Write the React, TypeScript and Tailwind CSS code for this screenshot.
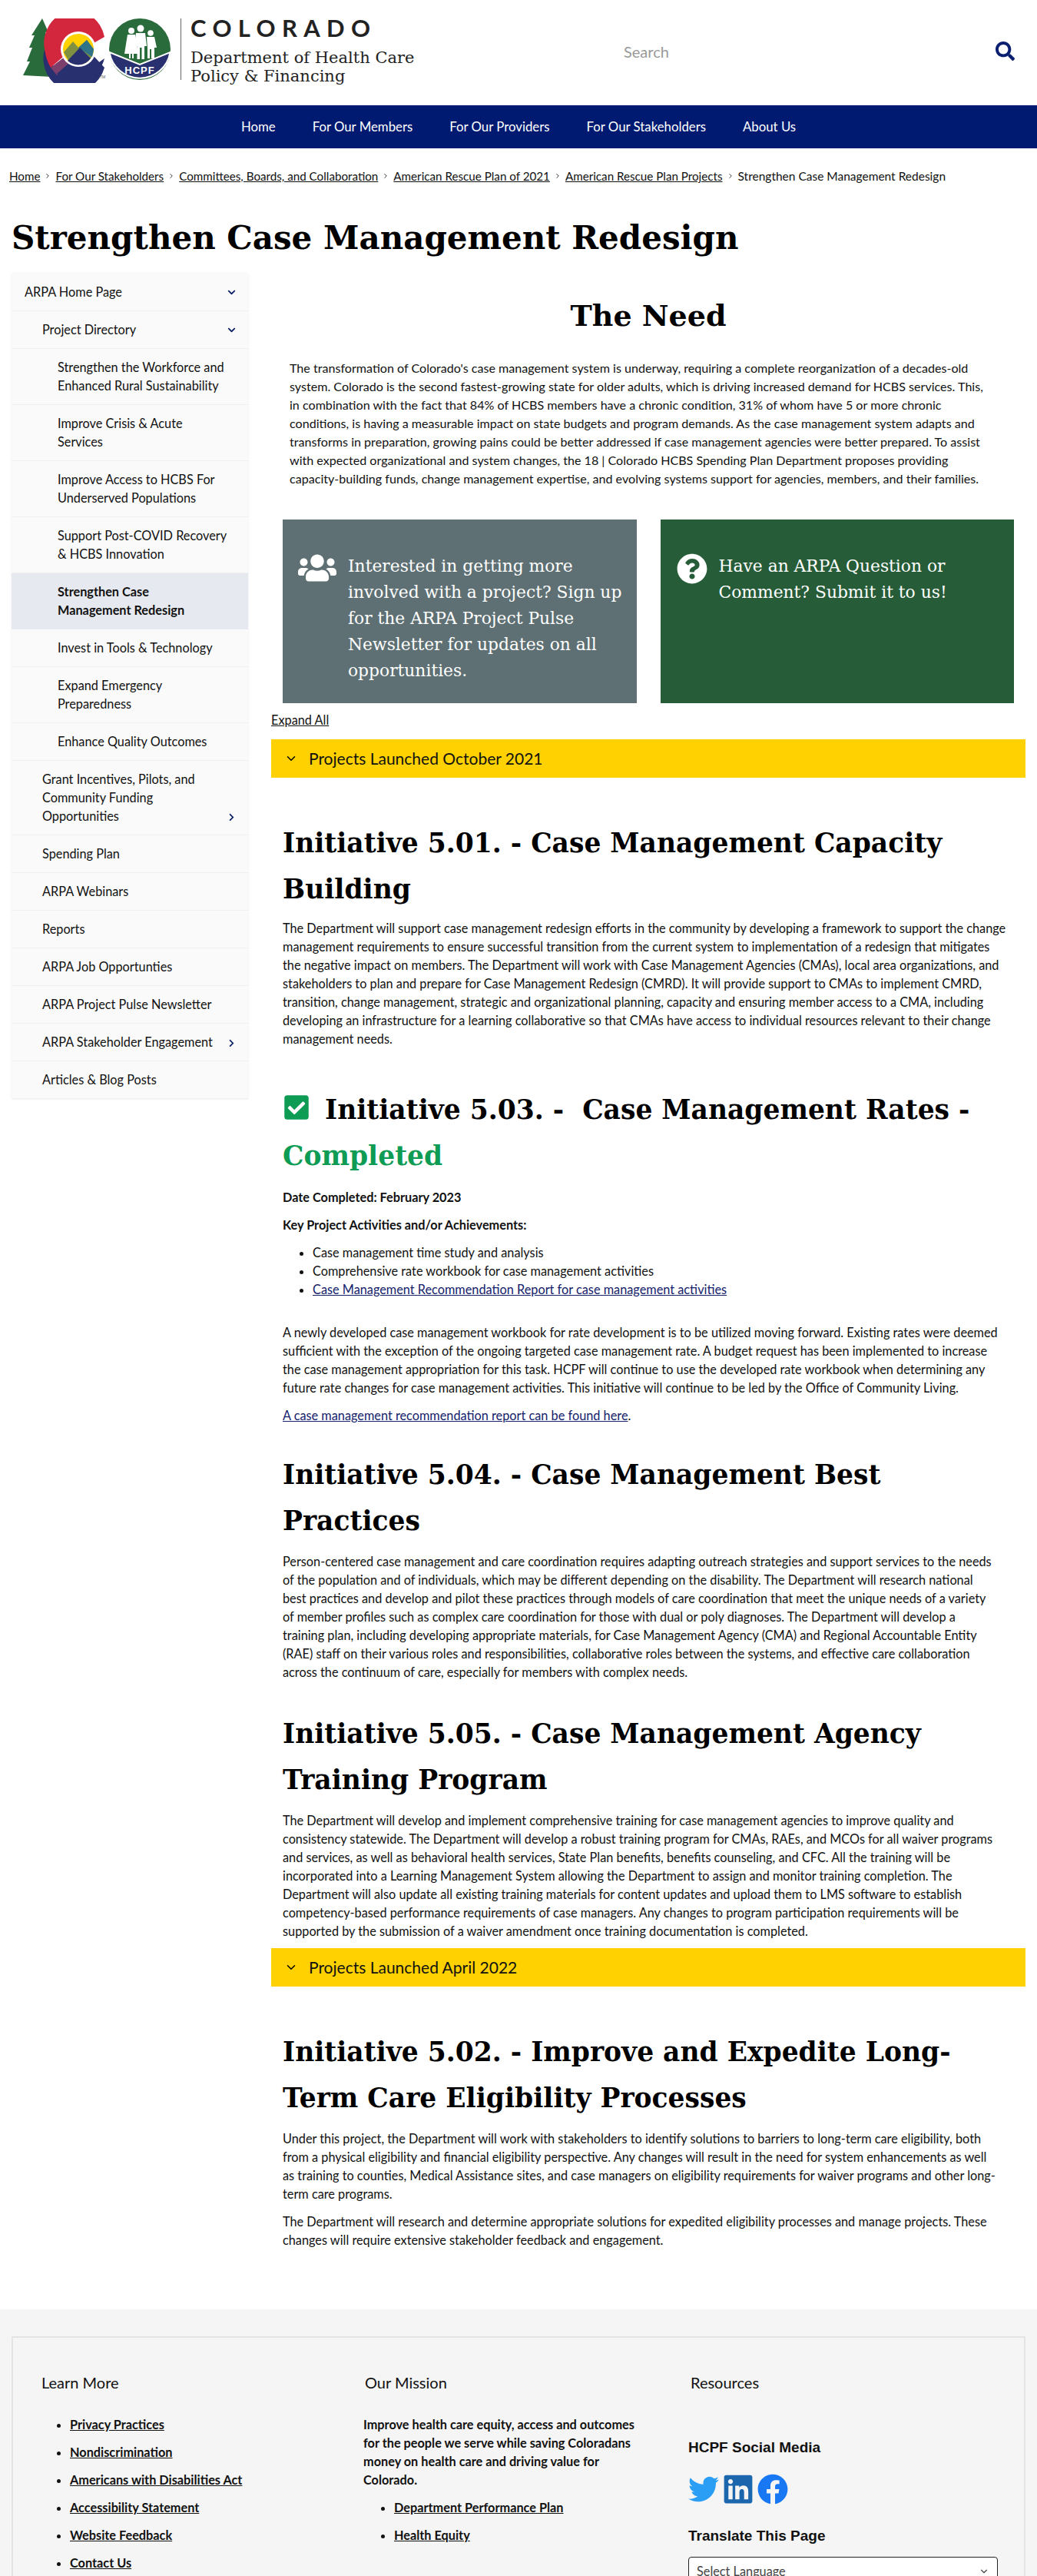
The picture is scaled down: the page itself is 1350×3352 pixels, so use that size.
import { ChevronDown, ChevronRight } from "lucide-react";
import { FaSearch, FaUsers, FaQuestionCircle, FaCheckSquare, FaTwitter, FaLinkedin, FaFacebook, FaChevronDown, FaChevronRight } from "react-icons/fa";

const navLinks = ["Home", "For Our Members", "For Our Providers", "For Our Stakeholders", "About Us"];

const crumbs = [
  "Home",
  "For Our Stakeholders",
  "Committees, Boards, and Collaboration",
  "American Rescue Plan of 2021",
  "American Rescue Plan Projects",
];

const sideItems = [
  { label: ["ARPA Home Page"], level: 0, icon: "down" },
  { label: ["Project Directory"], level: 1, icon: "down" },
  { label: ["Strengthen the Workforce and", "Enhanced Rural Sustainability"], level: 2 },
  { label: ["Improve Crisis & Acute", "Services"], level: 2 },
  { label: ["Improve Access to HCBS For", "Underserved Populations"], level: 2 },
  { label: ["Support Post-COVID Recovery", "& HCBS Innovation"], level: 2 },
  { label: ["Strengthen Case", "Management Redesign"], level: 2, active: true },
  { label: ["Invest in Tools & Technology"], level: 2 },
  { label: ["Expand Emergency", "Preparedness"], level: 2 },
  { label: ["Enhance Quality Outcomes"], level: 2 },
  { label: ["Grant Incentives, Pilots, and", "Community Funding", "Opportunities"], level: 1, icon: "right" },
  { label: ["Spending Plan"], level: 1 },
  { label: ["ARPA Webinars"], level: 1 },
  { label: ["Reports"], level: 1 },
  { label: ["ARPA Job Opportunties"], level: 1 },
  { label: ["ARPA Project Pulse Newsletter"], level: 1 },
  { label: ["ARPA Stakeholder Engagement"], level: 1, icon: "right" },
  { label: ["Articles & Blog Posts"], level: 1 },
];

const learnMore = [
  "Privacy Practices",
  "Nondiscrimination",
  "Americans with Disabilities Act",
  "Accessibility Statement",
  "Website Feedback",
  "Contact Us",
];

// line breaks follow the page as shown
const needText = [
  "The transformation of Colorado's case management system is underway, requiring a complete reorganization of a decades-old",
  "system. Colorado is the second fastest-growing state for older adults, which is driving increased demand for HCBS services. This,",
  "in combination with the fact that 84% of HCBS members have a chronic condition, 31% of whom have 5 or more chronic",
  "conditions, is having a measurable impact on state budgets and program demands. As the case management system adapts and",
  "transforms in preparation, growing pains could be better addressed if case management agencies were better prepared. To assist",
  "with expected organizational and system changes, the 18 | Colorado HCBS Spending Plan Department proposes providing",
  "capacity-building funds, change management expertise, and evolving systems support for agencies, members, and their families.",
];

const text501 = [
  "The Department will support case management redesign efforts in the community by developing a framework to support the change",
  "management requirements to ensure successful transition from the current system to implementation of a redesign that mitigates",
  "the negative impact on members. The Department will work with Case Management Agencies (CMAs), local area organizations, and",
  "stakeholders to plan and prepare for Case Management Redesign (CMRD). It will provide support to CMAs to implement CMRD,",
  "transition, change management, strategic and organizational planning, capacity and ensuring member access to a CMA, including",
  "developing an infrastructure for a learning collaborative so that CMAs have access to individual resources relevant to their change",
  "management needs.",
];

const text503 = [
  "A newly developed case management workbook for rate development is to be utilized moving forward. Existing rates were deemed",
  "sufficient with the exception of the ongoing targeted case management rate. A budget request has been implemented to increase",
  "the case management appropriation for this task. HCPF will continue to use the developed rate workbook when determining any",
  "future rate changes for case management activities. This initiative will continue to be led by the Office of Community Living.",
];

const text504 = [
  "Person-centered case management and care coordination requires adapting outreach strategies and support services to the needs",
  "of the population and of individuals, which may be different depending on the disability. The Department will research national",
  "best practices and develop and pilot these practices through models of care coordination that meet the unique needs of a variety",
  "of member profiles such as complex care coordination for those with dual or poly diagnoses. The Department will develop a",
  "training plan, including developing appropriate materials, for Case Management Agency (CMA) and Regional Accountable Entity",
  "(RAE) staff on their various roles and responsibilities, collaborative roles between the systems, and effective care collaboration",
  "across the continuum of care, especially for members with complex needs.",
];

const text505 = [
  "The Department will develop and implement comprehensive training for case management agencies to improve quality and",
  "consistency statewide. The Department will develop a robust training program for CMAs, RAEs, and MCOs for all waiver programs",
  "and services, as well as behavioral health services, State Plan benefits, benefits counseling, and CFC. All the training will be",
  "incorporated into a Learning Management System allowing the Department to assign and monitor training completion. The",
  "Department will also update all existing training materials for content updates and upload them to LMS software to establish",
  "competency-based performance requirements of case managers. Any changes to program participation requirements will be",
  "supported by the submission of a waiver amendment once training documentation is completed.",
];

const text502a = [
  "Under this project, the Department will work with stakeholders to identify solutions to barriers to long-term care eligibility, both",
  "from a physical eligibility and financial eligibility perspective. Any changes will result in the need for system enhancements as well",
  "as training to counties, Medical Assistance sites, and case managers on eligibility requirements for waiver programs and other long-",
  "term care programs.",
];

const text502b = [
  "The Department will research and determine appropriate solutions for expedited eligibility processes and manage projects. These",
  "changes will require extensive stakeholder feedback and engagement.",
];

const Logo = () => (
  <svg width="200" height="84" viewBox="0 0 200 84" className="shrink-0">
    {/* tree */}
    <path d="M25 0 L33 18 L29 18 L35 32 L31 32 L37 50 L38 76 L0 74 L9 56 L5 56 L12 38 L8 38 L15 22 L11 22 Z" fill="#2a6b3c" />
    {/* C */}
    <path d="M106 24 A38 40 0 0 0 28 40 L56 48 A20 21 0 0 1 92 32 Z" fill="#d3273e" />
    <path d="M28 40 A38 40 0 0 0 106 64 L92 49 A20 21 0 0 1 56 46 L48 60 L36 62 Z" fill="#28306f" />
    <path d="M28 40 L48 34 L52 50 L36 64 Q30 54 28 40 Z" fill="#d3273e" />
    <path d="M36 64 L54 50 L62 62 L44 74 Z" fill="#7c3f6c" />
    <path d="M44 72 L60 58 L92 62 L106 52 A38 40 0 0 1 44 72 Z" fill="#28306f" />
    <circle cx="72" cy="40" r="23" fill="#fff" />
    <circle cx="72" cy="40" r="20" fill="#ffd100" />
    <path d="M53 44 L65 30 L72 38 L83 28 L92 40 A20 20 0 0 1 60 56 Z" fill="#7f9140" />
    <path d="M72 38 L83 28 L92 40 L90 50 Z" fill="#2f7389" />
    <path d="M58 55 L74 38 L88 52 A20 20 0 0 1 58 55 Z" fill="#28306f" />
    <text x="100" y="78" fontSize="5" fill="#555" fontFamily="Liberation Sans, sans-serif">TM</text>
    {/* HCPF seal */}
    <circle cx="152" cy="40" r="40" fill="#2a6b3c" />
    <path d="M112.5 44 L152 60 L191.5 44 A40 40 0 0 1 112.5 44 Z" fill="#28306f" stroke="#fff" strokeWidth="2" />
    <g fill="#fff">
      <circle cx="141" cy="16" r="4" />
      <path d="M136 21 H146 L150 46 H144 V52 H142 V46 H140 V52 H138 V46 H132 Z" />
      <circle cx="153" cy="13" r="4.5" />
      <path d="M147 19 H159 L161 36 H158 V53 H154.5 V38 H152 V53 H148.5 V36 H145 Z" />
      <circle cx="166" cy="19" r="3.8" />
      <path d="M161 24 H171 L174 38 H171 V52 H167 V40 H165 V52 H162 V38 Z" />
    </g>
    <text x="152" y="72" textAnchor="middle" fontSize="13" fontWeight="700" letterSpacing="1" fill="#fff" fontFamily="Liberation Sans, sans-serif">HCPF</text>
  </svg>
);

function SideRow({ item }: { item: (typeof sideItems)[number] }) {
  const pad = item.level === 0 ? "pl-[17px]" : item.level === 1 ? "pl-[40px]" : "pl-[60px]";
  return (
    <div
      className={`relative flex items-end justify-between border-b pr-[16px] py-[12px] ${pad} ${
        item.active ? "bg-[#e6e9ef] border-[#e6e9ef] font-bold" : "bg-[#fafafa] border-[#efefef]"
      }`}
    >
      <div className="leading-[24px]">
        {item.label.map((l) => (
          <div key={l} className="whitespace-nowrap">
            {l}
          </div>
        ))}
      </div>
      {item.icon === "down" && <FaChevronDown className="text-[#0a1f63] mb-[6px]" size={11} />}
      {item.icon === "right" && <FaChevronRight className="text-[#0a1f63] mb-[5px]" size={11} />}
    </div>
  );
}

const Accordion = ({ title }: { title: string }) => (
  <div className="flex items-center h-[50px] bg-[#ffd100] pl-[17px]">
    <ChevronDown size={18} strokeWidth={2} className="text-black" />
    <span className="ml-[14px] text-[21px]">{title}</span>
  </div>
);

const H2 = ({ children }: { children: React.ReactNode }) => (
  <h2 className="[font-family:'DejaVu_Serif',serif] font-bold text-[34.5px] leading-[60px] text-black">{children}</h2>
);

const Para = ({ lines, className = "" }: { lines: string[]; className?: string }) => (
  <p className={`whitespace-nowrap ${className}`}>
    {lines.map((l) => (
      <span key={l} className="block">
        {l}
      </span>
    ))}
  </p>
);

export default function App() {
  return (
    <div className="h-[3352px] overflow-hidden bg-white text-[#111] text-[16.3px] leading-[24px] [font-family:Lato,sans-serif]">
      {/* header */}
      <header className="flex items-start h-[137px]">
        <div className="ml-[30px] mt-[24px]">
          <Logo />
        </div>
        <div className="ml-[5px] mt-[24px] h-[80px] w-px bg-[#666]" />
        <div className="ml-[12px] mt-[21px]">
          <div className="[font-family:Lato,sans-serif] font-bold text-[31px] leading-[30px] tracking-[0.27em] text-[#222]">COLORADO</div>
          <div className="[font-family:'DejaVu_Serif',serif] text-[21px] leading-[24px] mt-[12px] text-[#222]">
            Department of Health Care
            <br />
            Policy &amp; Financing
          </div>
        </div>
        <div className="ml-auto mt-[54px] flex w-[538px] items-center justify-between pr-[29px]">
          <span className="text-[20px] text-[#999]">Search</span>
          <FaSearch size={25} className="text-[#0b1f70]" />
        </div>
      </header>

      {/* nav */}
      <nav className="flex justify-center gap-[48px] h-[56px] items-center bg-[#001a72] text-white text-[16.8px]">
        {navLinks.map((n) => (
          <a key={n}>{n}</a>
        ))}
      </nav>

      {/* breadcrumb */}
      <div className="flex items-center pl-[12px] mt-[24px] text-[15.2px] whitespace-nowrap">
        {crumbs.map((c) => (
          <span key={c} className="flex items-center">
            <a className="underline">{c}</a>
            <ChevronRight size={10} className="mx-[5px]" />
          </span>
        ))}
        <span className="text-[15.5px]">Strengthen Case Management Redesign</span>
      </div>

      <h1 className="[font-family:'DejaVu_Serif',serif] font-bold text-[42px] leading-[60px] text-black pl-[15px] mt-[39px]">
        Strengthen Case Management Redesign
      </h1>

      <div className="flex mt-[16px]">
        {/* sidebar */}
        <aside className="ml-[15px] w-[308px] shrink-0 self-start shadow-[0_0_3px_rgba(0,0,0,0.08)]">
          {sideItems.map((i) => (
            <SideRow key={i.label[0]} item={i} />
          ))}
        </aside>

        {/* main */}
        <main className="ml-[30px] w-[982px]">
          <h2 className="[font-family:'DejaVu_Serif',serif] font-bold text-[38px] leading-[60px] text-black text-center mt-[25px]">The Need</h2>
          <Para lines={needText} className="mx-[24px] mt-[26px] text-[16.1px]" />

          {/* cards */}
          <div className="grid grid-cols-2 gap-[31px] mx-[15px] mt-[41px] [font-family:'DejaVu_Serif',serif] text-[21.8px] leading-[34px] text-white">
            <a className="flex h-[239px] bg-[#5e7073] pt-[44px] pl-[20px] pr-[10px]">
              <FaUsers size={50} className="shrink-0 mr-[15px] -mt-[6px]" />
              <span>Interested in getting more involved with a project? Sign up for the ARPA Project Pulse Newsletter for updates on all opportunities.</span>
            </a>
            <a className="flex h-[239px] bg-[#265c38] pt-[44px] pl-[21px] pr-[10px]">
              <FaQuestionCircle size={40} className="shrink-0 mr-[15px]" />
              <span>Have an ARPA Question or Comment? Submit it to us!</span>
            </a>
          </div>

          <a className="block underline mt-[10px]">Expand All</a>
          <div className="mt-[13px]">
            <Accordion title="Projects Launched October 2021" />
          </div>

          <section className="px-[15px]">
            <div className="mt-[55px]">
              <H2>Initiative 5.01. - Case Management Capacity Building</H2>
            </div>
            <Para lines={text501} className="mt-[9px]" />

            <div className="mt-[50px]">
              <H2>
                <FaCheckSquare size={36} className="inline text-[#0e9c55] mr-[19px] align-[-3px]" />
                Initiative 5.03. -&nbsp; Case Management Rates - <span className="text-[#0e9c55]">Completed</span>
              </H2>
            </div>
            <p className="mt-[12px] font-bold">Date Completed: February 2023</p>
            <p className="mt-[12px] font-bold">Key Project Activities and/or Achievements:</p>
            <ul className="list-disc pl-[39px] mt-[12px]">
              <li>Case management time study and analysis</li>
              <li>Comprehensive rate workbook for case management activities</li>
              <li>
                <a className="underline text-[#14216b]">Case Management Recommendation Report for case management activities</a>
              </li>
            </ul>
            <Para lines={text503} className="mt-[32px]" />
            <p className="mt-[12px]">
              <a className="underline text-[#14216b]">A case management recommendation report can be found here</a>.
            </p>

            <div className="mt-[35px]">
              <H2>Initiative 5.04. - Case Management Best Practices</H2>
            </div>
            <Para lines={text504} className="mt-[11px]" />

            <div className="mt-[38px]">
              <H2>Initiative 5.05. - Case Management Agency Training Program</H2>
            </div>
            <Para lines={text505} className="mt-[11px]" />
          </section>

          <div className="mt-[10px]">
            <Accordion title="Projects Launched April 2022" />
          </div>

          <section className="px-[15px]">
            <div className="mt-[55px]">
              <H2>Initiative 5.02. - Improve and Expedite Long-Term Care Eligibility Processes</H2>
            </div>
            <Para lines={text502a} className="mt-[11px]" />
            <Para lines={text502b} className="mt-[12px]" />
          </section>
        </main>
      </div>

      {/* footer */}
      <footer className="mt-[78px] bg-[#f5f5f5] pt-[35px] h-[348px]">
        <div className="mx-[15px] h-full border-2 border-[#e4e4e4] border-b-0 rounded-t-[2px] grid grid-cols-[419px_423px_1fr] pl-[37px] pt-[46px]">
          <div>
            <h3 className="text-[20px] leading-[24px]">Learn More</h3>
            <ul className="list-disc pl-[37px] mt-[31px] font-bold">
              {learnMore.map((l) => (
                <li key={l} className="mb-[12px]">
                  <a className="underline">{l}</a>
                </li>
              ))}
            </ul>
          </div>
          <div>
            <h3 className="text-[20px] leading-[24px] ml-[2px]">Our Mission</h3>
            <p className="mt-[31px] font-bold w-[372px]">
              Improve health care equity, access and outcomes for the people we serve while saving Coloradans money on health care and driving value for Colorado.
            </p>
            <ul className="list-disc pl-[40px] mt-[12px] font-bold">
              <li className="mb-[12px]">
                <a className="underline">Department Performance Plan</a>
              </li>
              <li>
                <a className="underline">Health Equity</a>
              </li>
            </ul>
          </div>
          <div>
            <h3 className="text-[20px] leading-[24px] ml-[3px]">Resources</h3>
            <h4 className="[font-family:'Liberation_Sans',sans-serif] font-bold text-[19px] leading-[24px] mt-[61px]">HCPF Social Media</h4>
            <div className="flex items-center gap-[4px] mt-[21px]">
              <FaTwitter size={40} className="text-[#2a9df4]" />
              <FaLinkedin size={42} className="text-[#1c66ad]" />
              <FaFacebook size={40} className="text-[#1877f2]" />
            </div>
            <h4 className="[font-family:'Liberation_Sans',sans-serif] font-bold text-[19px] leading-[24px] mt-[28px]">Translate This Page</h4>
            <div className="mt-[15px] flex h-[38px] w-[403px] items-center justify-between rounded-[4px] border border-[#222] bg-white px-[10px] text-[#444]">
              <span>Select Language</span>
              <ChevronDown size={14} />
            </div>
          </div>
        </div>
      </footer>
    </div>
  );
}
